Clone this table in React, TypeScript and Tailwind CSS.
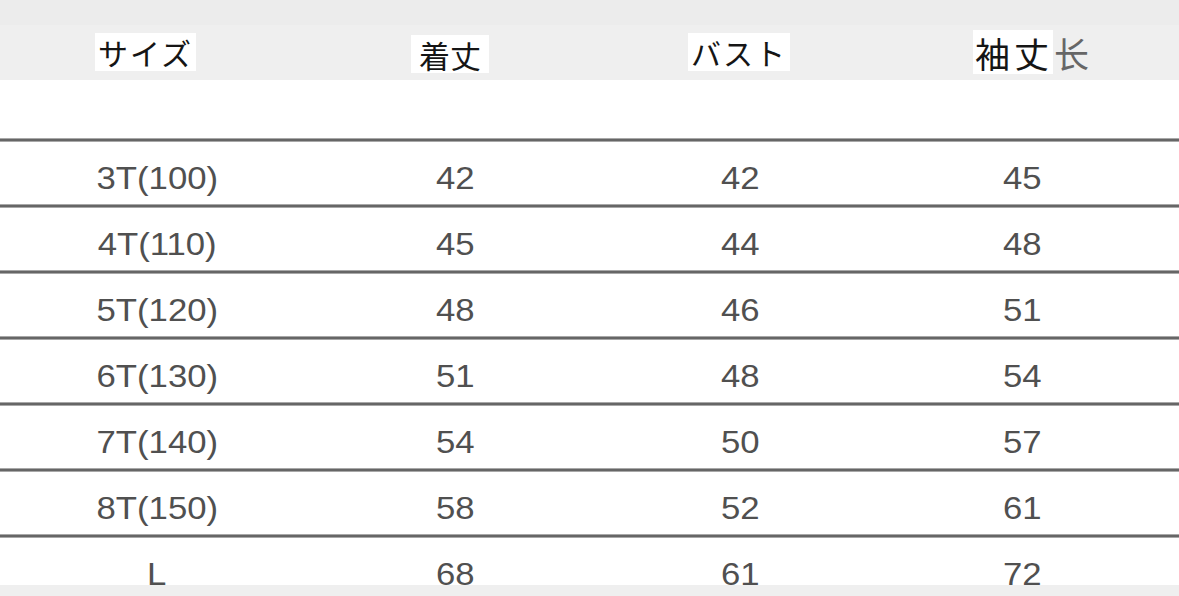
import React from "react";

const rows: [string, string, string, string][] = [
  ["3T(100)", "42", "42", "45"],
  ["4T(110)", "45", "44", "48"],
  ["5T(120)", "48", "46", "51"],
  ["6T(130)", "51", "48", "54"],
  ["7T(140)", "54", "50", "57"],
  ["8T(150)", "58", "52", "61"],
  ["L", "68", "61", "72"],
];

const cjk = { fontFamily: '"Noto Sans CJK JP", "Noto Sans", sans-serif' };
const lat = { fontFamily: '"Liberation Sans", Arial, sans-serif' };

function Line() {
  return <div className="h-[4px] w-full border-y border-[#a8a8a8] bg-[#666666]" />;
}

export default function App() {
  return (
    <div className="w-[1179px] h-[596px] bg-white flex flex-col overflow-hidden">
      <div className="h-[25px] bg-[#ececec]" />
      <div className="h-[55px] bg-[#efefef] relative" style={cjk}>
        <div className="absolute left-[95px] top-[8px] h-[38px] w-[101px] bg-white flex items-center justify-center text-[30px] leading-none text-[#151515] tracking-[2px]">
          サイズ
        </div>
        <div className="absolute left-[411px] top-[10px] h-[38px] w-[78px] bg-white flex items-center justify-center text-[31px] leading-none text-[#151515]">
          着丈
        </div>
        <div className="absolute left-[688px] top-[8px] h-[38px] w-[102px] bg-white flex items-center justify-center text-[30px] leading-none text-[#151515] tracking-[2px]">
          バスト
        </div>
        <div className="absolute left-[973px] top-[5px] h-[44px] w-[130px] flex items-center text-[35px] leading-none">
          <span className="bg-white text-[#151515] h-full flex items-center tracking-[4px] pl-[2px]">袖丈</span>
          <span className="text-[#666666] ml-[1px]">长</span>
        </div>
      </div>
      <div className="h-[58px] bg-white" />
      {rows.map((r, i) => (
        <div key={i}>
          <Line />
          <div
            className={`grid grid-cols-[314px_282px_288px_276px] text-[#505050] text-[31px] leading-[30px] pt-[22px] ${
              i === rows.length - 1 ? "h-[47px]" : "h-[62px]"
            }`}
            style={lat}
          >
            {r.map((c, j) => (
              <div key={j} className="flex justify-center">
                <span className="inline-block scale-x-[1.12]">{c}</span>
              </div>
            ))}
          </div>
        </div>
      ))}
      <div className="flex-1 bg-[#efefef]" />
    </div>
  );
}
